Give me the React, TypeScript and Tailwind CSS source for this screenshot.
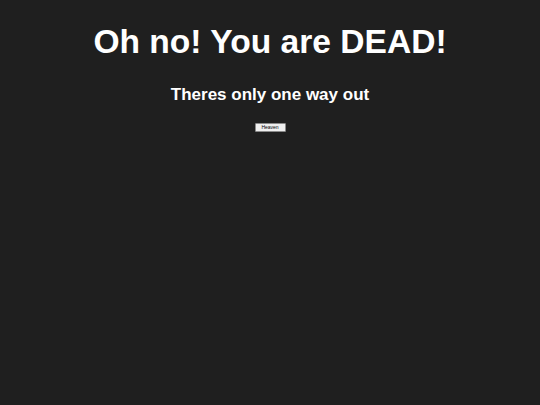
export default function App() {
    return (
        <div className="flex min-h-[405px] w-full flex-col items-center bg-[#1f1f1f] font-['Liberation_Sans',Arial,sans-serif] text-white">

            <h1 className="mt-[20px] text-[33.6px] font-bold leading-[44px]">
                Oh no! You are DEAD!
            </h1>

            <h3 className="mt-[21px] text-[17px] font-bold leading-[20px]">
                Theres only one way out
            </h3>

            <button className="mt-[18px] h-[9px] w-[31px] rounded-[1px] border border-[#8a8a8a] bg-[#efefef] text-[5px] leading-[7px] text-black">
                Heaven
            </button>

        </div>
    );
}
